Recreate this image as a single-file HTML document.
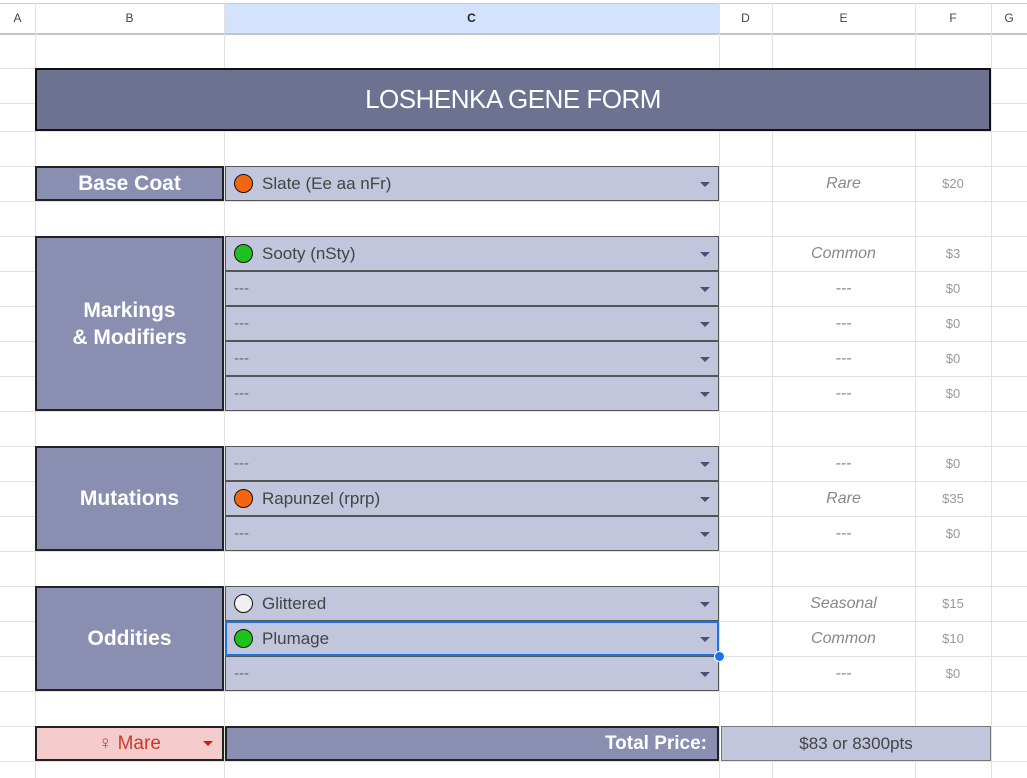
<!DOCTYPE html>
<html><head><meta charset="utf-8">
<style>
*{margin:0;padding:0;box-sizing:border-box}
body{width:1027px;height:778px;background:#fff;position:relative;overflow:hidden;font-family:"Liberation Sans",sans-serif}
.a{position:absolute}
.vl{position:absolute;top:3px;width:1px;height:775px;background:#e1e1e1}
.hl{position:absolute;left:0;width:1027px;height:1px;background:#e1e1e1}
.hd{position:absolute;top:3px;height:30px;font-size:12px;color:#444;display:flex;align-items:center;justify-content:center}
.lab{position:absolute;left:35px;width:189px;background:#8a8eb0;border:2px solid #222;color:#fff;font-weight:bold;font-size:21px;display:flex;align-items:center;justify-content:center;text-align:center;line-height:27px}
.dd{position:absolute;left:225px;width:494px;height:35px;background:#c2c6dc;border:1px solid #555;font-size:17px;color:#444;display:flex;align-items:center;padding-left:8px}
.dd .c{width:19px;height:19px;border-radius:50%;border:1.5px solid #111;margin-right:9px}
.dd .ar{position:absolute;right:8px;top:15px;width:0;height:0;border-left:5px solid transparent;border-right:5px solid transparent;border-top:5px solid #4a4f7a}
.dd.dash{color:#666;font-size:15px}
.e{position:absolute;left:772px;width:143px;height:35px;display:flex;align-items:center;justify-content:center;font-style:italic;color:#888;font-size:16px}
.f{position:absolute;left:915px;width:76px;height:35px;display:flex;align-items:center;justify-content:center;color:#999;font-size:13px}
</style></head><body>
<div class="hl" style="top:3px;background:#ccc"></div>
<div class="a" style="left:224px;top:4px;width:495px;height:29px;background:#d3e3fd"></div>
<div class="hl" style="top:33px;height:2px;background:#c4c4c4"></div>
<div class="vl" style="left:35px"></div><div class="vl" style="left:224px"></div><div class="vl" style="left:719px"></div><div class="vl" style="left:772px"></div><div class="vl" style="left:915px"></div><div class="vl" style="left:991px"></div>
<div class="hd" style="left:0;width:35px">A</div><div class="hd" style="left:35px;width:189px">B</div><div class="hd" style="left:224px;width:495px;font-weight:bold;color:#222">C</div><div class="hd" style="left:719px;width:53px">D</div><div class="hd" style="left:772px;width:143px">E</div><div class="hd" style="left:915px;width:76px">F</div><div class="hd" style="left:991px;width:36px">G</div>
<div class="hl" style="top:68px"></div><div class="hl" style="top:103px"></div><div class="hl" style="top:131px"></div><div class="hl" style="top:166px"></div><div class="hl" style="top:201px"></div><div class="hl" style="top:236px"></div><div class="hl" style="top:271px"></div><div class="hl" style="top:306px"></div><div class="hl" style="top:341px"></div><div class="hl" style="top:376px"></div><div class="hl" style="top:411px"></div><div class="hl" style="top:446px"></div><div class="hl" style="top:481px"></div><div class="hl" style="top:516px"></div><div class="hl" style="top:551px"></div><div class="hl" style="top:586px"></div><div class="hl" style="top:621px"></div><div class="hl" style="top:656px"></div><div class="hl" style="top:691px"></div><div class="hl" style="top:726px"></div><div class="hl" style="top:761px"></div>

<div class="a" style="left:35px;top:68px;width:956px;height:63px;background:#6d7290;border:2px solid #111;color:#fff;font-size:26px;display:flex;align-items:center;justify-content:center;letter-spacing:-0.5px">LOSHENKA GENE FORM</div>

<div class="lab" style="top:166px;height:35px">Base Coat</div>
<div class="lab" style="top:236px;height:175px">Markings<br>&amp; Modifiers</div>
<div class="lab" style="top:446px;height:105px">Mutations</div>
<div class="lab" style="top:586px;height:105px">Oddities</div>

<div class="dd" style="top:166px"><span class="c" style="background:#f4650f"></span>Slate (Ee aa nFr)<span class="ar"></span></div>
<div class="dd" style="top:236px"><span class="c" style="background:#1ec21e"></span>Sooty (nSty)<span class="ar"></span></div>
<div class="dd dash" style="top:271px">---<span class="ar"></span></div>
<div class="dd dash" style="top:306px">---<span class="ar"></span></div>
<div class="dd dash" style="top:341px">---<span class="ar"></span></div>
<div class="dd dash" style="top:376px">---<span class="ar"></span></div>
<div class="dd dash" style="top:446px">---<span class="ar"></span></div>
<div class="dd" style="top:481px"><span class="c" style="background:#f4650f"></span>Rapunzel (rprp)<span class="ar"></span></div>
<div class="dd dash" style="top:516px">---<span class="ar"></span></div>
<div class="dd" style="top:586px"><span class="c" style="background:#f0f0f0"></span>Glittered<span class="ar"></span></div>
<div class="dd" style="top:621px;border:2px solid #1a73e8;padding-left:7px"><span class="c" style="background:#1ec21e"></span>Plumage<span class="ar" style="right:7px;top:14px"></span></div>
<div class="dd dash" style="top:656px">---<span class="ar"></span></div>
<div class="a" style="left:714px;top:651px;width:11px;height:11px;border-radius:50%;background:#1a73e8;border:1px solid #fff"></div>

<div class="e" style="top:166px">Rare</div><div class="f" style="top:166px">$20</div>
<div class="e" style="top:236px">Common</div><div class="f" style="top:236px">$3</div>
<div class="e" style="top:271px">---</div><div class="f" style="top:271px">$0</div>
<div class="e" style="top:306px">---</div><div class="f" style="top:306px">$0</div>
<div class="e" style="top:341px">---</div><div class="f" style="top:341px">$0</div>
<div class="e" style="top:376px">---</div><div class="f" style="top:376px">$0</div>
<div class="e" style="top:446px">---</div><div class="f" style="top:446px">$0</div>
<div class="e" style="top:481px">Rare</div><div class="f" style="top:481px">$35</div>
<div class="e" style="top:516px">---</div><div class="f" style="top:516px">$0</div>
<div class="e" style="top:586px">Seasonal</div><div class="f" style="top:586px">$15</div>
<div class="e" style="top:621px">Common</div><div class="f" style="top:621px">$10</div>
<div class="e" style="top:656px">---</div><div class="f" style="top:656px">$0</div>

<div class="a" style="left:35px;top:726px;width:189px;height:35px;background:#f4cccc;border:2px solid #222;color:#cc3a2a;font-size:19px;display:flex;align-items:center;justify-content:center">♀ Mare<span style="position:absolute;right:9px;top:13px;border-left:5px solid transparent;border-right:5px solid transparent;border-top:5px solid #cc1a1a"></span></div>
<div class="a" style="left:225px;top:726px;width:494px;height:35px;background:#8a8eb0;border:2px solid #222;color:#fff;font-weight:bold;font-size:19px;display:flex;align-items:center;justify-content:flex-end;padding-right:10px">Total Price:</div>
<div class="a" style="left:721px;top:726px;width:270px;height:35px;background:#c2c6dc;border:1px solid #777;color:#444;font-size:17px;display:flex;align-items:center;justify-content:center">$83 or 8300pts</div>
</body></html>
